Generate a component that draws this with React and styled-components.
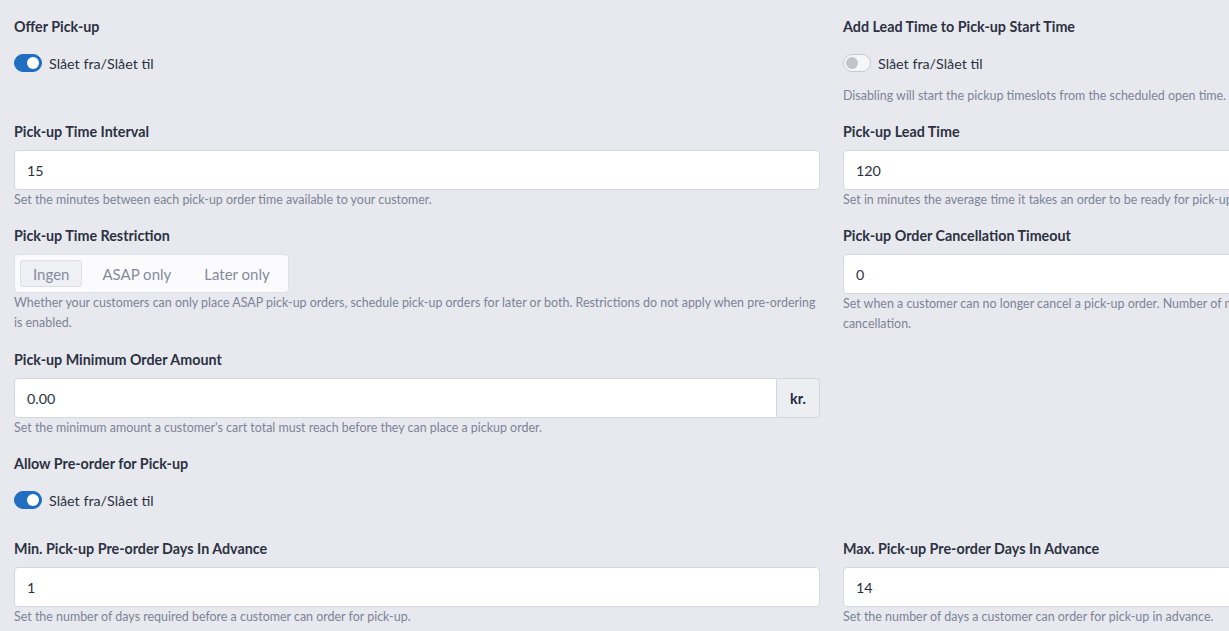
import React from "react";
import styled, { createGlobalStyle } from "styled-components";

const GlobalStyle = createGlobalStyle`
  html, body {
    margin: 0;
    padding: 0;
    background: #e8e9ee;
    overflow: hidden;
  }
  body {
    font-family: Lato, "Liberation Sans", sans-serif;
    color: #2c3142;
  }
`;

const Page = styled.div`
  padding: 17px 0 0 14px;
  width: 1700px;
`;

const FormGrid = styled.div`
  display: grid;
  grid-template-columns: 806px 806px;
  column-gap: 23px;
`;

const Group = styled.div`
  margin-bottom: 16px;
`;

const Label = styled.div`
  font-size: 14.3px;
  line-height: 20px;
  font-weight: 700;
  color: #2c3142;
  margin-bottom: 8px;
`;

const Help = styled.div`
  font-size: 12.45px;
  line-height: 20px;
  color: #7c8398;
`;

const SwitchRow = styled.label`
  display: flex;
  align-items: center;
  gap: 7px;
  height: 20px;
  padding: 8px 0 13px;
  font-size: 14.3px;
  color: #2c3142;
`;

const Track = styled.span`
  position: relative;
  box-sizing: border-box;
  width: 28px;
  height: 18px;
  border-radius: 9px;
  background: ${(p) => (p.$on ? "#1f6ec2" : "#f6f6f9")};
  border: 1px solid ${(p) => (p.$on ? "#1f6ec2" : "#c9cbd3")};

  &::after {
    content: "";
    position: absolute;
    top: 2px;
    left: ${(p) => (p.$on ? "12px" : "2px")};
    width: 12px;
    height: 12px;
    border-radius: 50%;
    background: ${(p) => (p.$on ? "#ffffff" : "#c2c3cb")};
  }
`;

const InputGroup = styled.div`
  display: flex;
  height: 40px;
`;

const Input = styled.div`
  flex: 1;
  box-sizing: border-box;
  height: 40px;
  display: flex;
  align-items: center;
  padding: 0 12px;
  background: #fff;
  border: 1px solid #d4d7df;
  border-radius: ${(p) => (p.$addon ? "4px 0 0 4px" : "4px")};
  font-size: 14.3px;
  color: #2c3142;
`;

const Addon = styled.div`
  box-sizing: border-box;
  width: 43px;
  display: flex;
  align-items: center;
  justify-content: center;
  background: #eceef2;
  border: 1px solid #d4d7df;
  border-left: none;
  border-radius: 0 4px 4px 0;
  font-size: 14.3px;
  font-weight: 700;
  color: #1f2740;
`;

const Segmented = styled.div`
  display: inline-flex;
  box-sizing: border-box;
  height: 39px;
  padding: 5px;
  gap: 7px;
  background: #fbfbfd;
  border: 1px solid #dde0e7;
  border-radius: 4px;
`;

const SegButton = styled.div`
  display: flex;
  align-items: center;
  box-sizing: border-box;
  padding: 0 12px;
  font-size: 15px;
  color: #858b9f;
  border-radius: 3px;
  border: 1px solid ${(p) => (p.$active ? "#dcdfe6" : "transparent")};
  background: ${(p) => (p.$active ? "#eef0f4" : "transparent")};
`;

const Switch = ({ on }) => (
  <SwitchRow>
    <Track $on={on} />
    Slået fra/Slået til
  </SwitchRow>
);

const Field = ({ label, value, help, addon }) => (
  <Group>
    <Label>{label}</Label>
    <InputGroup>
      <Input $addon={!!addon}>{value}</Input>
      {addon && <Addon>{addon}</Addon>}
    </InputGroup>
    <Help>{help}</Help>
  </Group>
);

export default function App() {
  return (
    <Page>
      <GlobalStyle />
      <FormGrid>
        <Group>
          <Label>Offer Pick-up</Label>
          <Switch on />
        </Group>
        <Group>
          <Label>Add Lead Time to Pick-up Start Time</Label>
          <Switch on={false} />
          <Help>Disabling will start the pickup timeslots from the scheduled open time.</Help>
        </Group>

        <Field
          label="Pick-up Time Interval"
          value="15"
          help="Set the minutes between each pick-up order time available to your customer."
        />
        <Field
          label="Pick-up Lead Time"
          value="120"
          help="Set in minutes the average time it takes an order to be ready for pick-up after being accepted."
        />

        <Group>
          <Label>Pick-up Time Restriction</Label>
          <Segmented>
            <SegButton $active>Ingen</SegButton>
            <SegButton>ASAP only</SegButton>
            <SegButton>Later only</SegButton>
          </Segmented>
          <Help>
            Whether your customers can only place ASAP pick-up orders, schedule pick-up orders for later or both. Restrictions do not apply when pre-ordering is enabled.
          </Help>
        </Group>
        <Field
          label="Pick-up Order Cancellation Timeout"
          value="0"
          help="Set when a customer can no longer cancel a pick-up order. Number of minutes before the pick-up time. Leave as 0 to disable customer order cancellation."
        />

        <Field
          label="Pick-up Minimum Order Amount"
          value="0.00"
          addon="kr."
          help="Set the minimum amount a customer's cart total must reach before they can place a pickup order."
        />
        <div />

        <Group>
          <Label>Allow Pre-order for Pick-up</Label>
          <Switch on />
        </Group>
        <div />

        <Field
          label="Min. Pick-up Pre-order Days In Advance"
          value="1"
          help="Set the number of days required before a customer can order for pick-up."
        />
        <Field
          label="Max. Pick-up Pre-order Days In Advance"
          value="14"
          help="Set the number of days a customer can order for pick-up in advance."
        />
      </FormGrid>
    </Page>
  );
}
